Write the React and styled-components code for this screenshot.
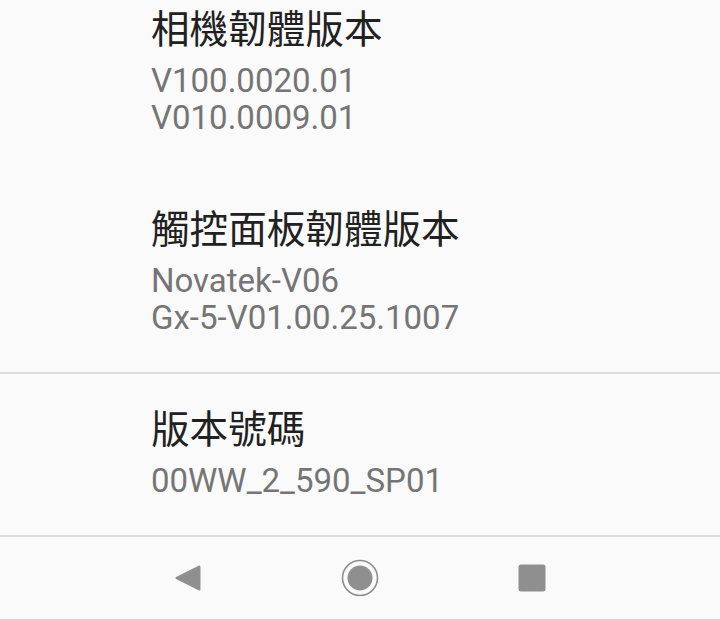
import React from "react";
import styled, { createGlobalStyle } from "styled-components";

const Global = createGlobalStyle`
  html, body { margin: 0; padding: 0; background: #fafafa; }
  body { font-family: Roboto, "Noto Sans CJK TC", sans-serif; -webkit-font-smoothing: antialiased; }
  * { box-sizing: border-box; }
`;

const Screen = styled.div`
  width: 720px;
  height: 619px;
  display: flex;
  flex-direction: column;
  background: #fafafa;
  overflow: hidden;
`;

const Scroller = styled.div`
  flex: 1;
  overflow: hidden;
`;

const List = styled.div`
  display: flex;
  flex-direction: column;
  margin-top: ${(p) => p.$offset}px;
`;

const Item = styled.div`
  padding: ${(p) => p.$top ?? 34}px 24px 36px 151px;
  display: flex;
  flex-direction: column;
`;

const Title = styled.div`
  font-family: Roboto, "Noto Sans CJK TC", sans-serif;
  font-size: 38.6px;
  line-height: 48px;
  color: #212121;
`;

const Summary = styled.div`
  margin-top: 8px;
  font-family: Roboto, "Noto Sans CJK TC", sans-serif;
  font-size: 33px;
  line-height: 37px;
  color: #757575;
  white-space: pre-line;
`;

const Divider = styled.div`
  height: 2px;
  background: #dedede;
`;

const NavBar = styled.div`
  height: 84px;
  flex-shrink: 0;
  border-top: 2px solid #dedede;
  display: flex;
  align-items: center;
  justify-content: center;
`;

const NavButton = styled.div`
  width: 172px;
  height: 82px;
  display: flex;
  align-items: center;
  justify-content: center;
`;

const items = [
  { title: "相機韌體版本", summary: "V100.0020.01\nV010.0009.01" },
  { title: "觸控面板韌體版本", summary: "Novatek-V06\nGx-5-V01.00.25.1007" },
];

export default function App() {
  return (
    <>
      <Global />
      <Screen>
        <Scroller>
          <List $offset={-28}>
            {items.map((it) => (
              <Item key={it.title}>
                <Title>{it.title}</Title>
                <Summary>{it.summary}</Summary>
              </Item>
            ))}
            <Divider />
            <Item $top={32}>
              <Title>版本號碼</Title>
              <Summary>00WW_2_590_SP01</Summary>
            </Item>
          </List>
        </Scroller>
        <NavBar>
          <NavButton>
            <svg width="28" height="30" viewBox="0 0 28 30">
              <path d="M25 2.5 Q26.5 2 26.5 4 V26 Q26.5 28 25 27.5 L2 16 Q0.8 15 2 14 Z" fill="#8f8f8f" />
            </svg>
          </NavButton>
          <NavButton>
            <svg width="40" height="40" viewBox="0 0 40 40">
              <circle cx="20" cy="20" r="17.5" fill="none" stroke="#8f8f8f" strokeWidth="1.6" />
              <circle cx="20" cy="20" r="12.5" fill="#8f8f8f" />
            </svg>
          </NavButton>
          <NavButton>
            <svg width="28" height="28" viewBox="0 0 28 28">
              <rect x="0.5" y="0.5" width="27" height="27" rx="2.5" fill="#8f8f8f" />
            </svg>
          </NavButton>
        </NavBar>
      </Screen>
    </>
  );
}
